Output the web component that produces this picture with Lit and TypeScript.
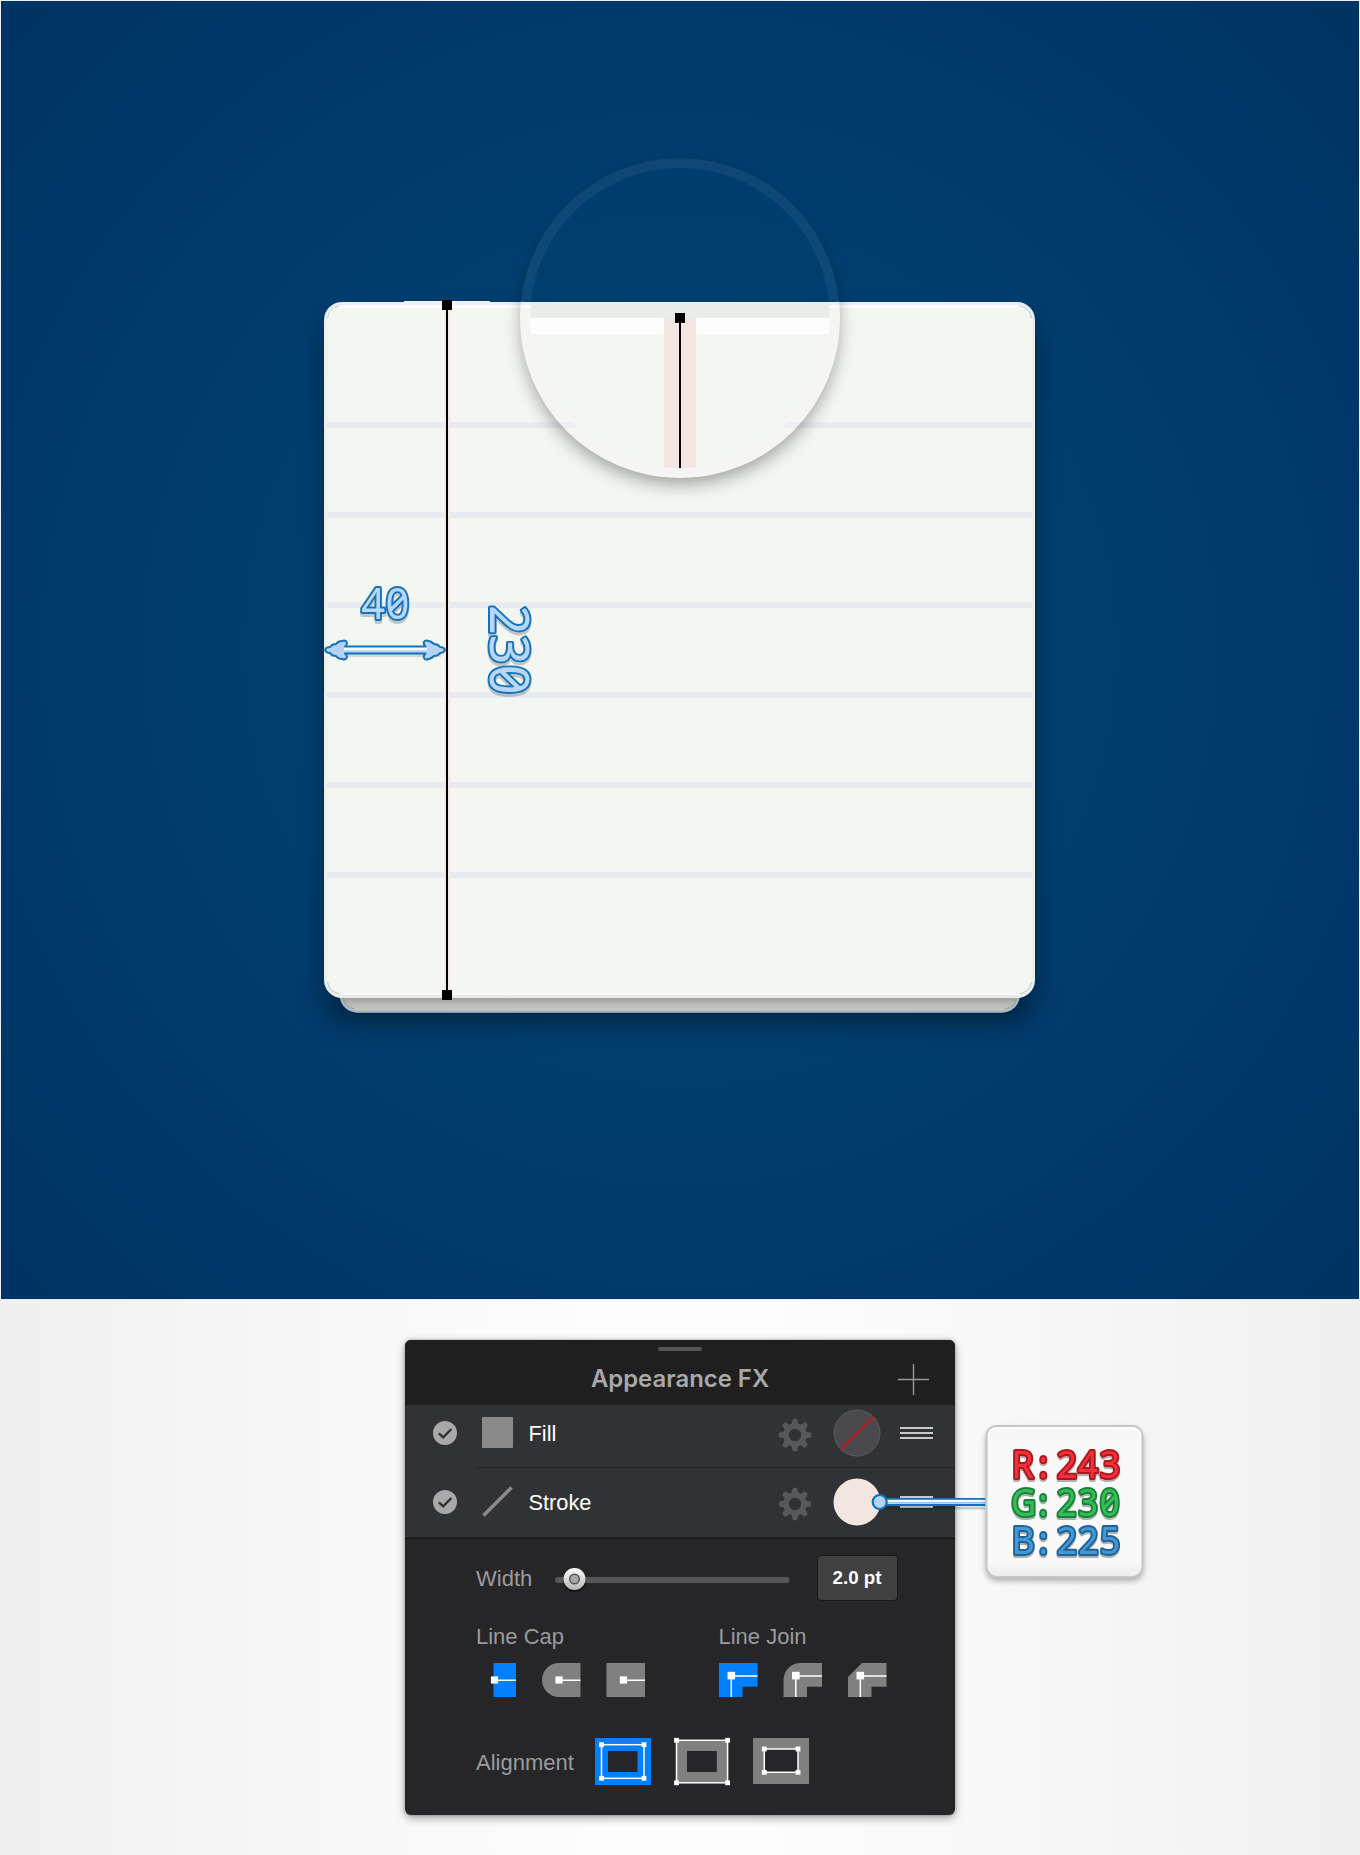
import { LitElement, html, svg, css } from "lit";
import { customElement } from "lit/decorators.js";

const S = (x: number, y: number, r = 3.6) => svg`<rect x=${x - r} y=${y - r} width=${2 * r} height=${2 * r} fill="#fff"/>`;

const gear = () => {
  const teeth = [];
  for (let i = 0; i < 8; i++) {
    teeth.push(svg`<path d="M-3.6 -10 L-2.4 -15.2 Q-2.2 -16.2 -1.2 -16.2 H1.2 Q2.2 -16.2 2.4 -15.2 L3.6 -10Z" transform="rotate(${i * 45})"/>`);
  }
  return html`<svg class="gear" width="34" height="34" viewBox="-17 -17 34 34">
    <g fill="#57585b">${teeth}</g><circle r="9" fill="none" stroke="#57585b" stroke-width="5.6"/></svg>`;
};

const check = html`<svg class="check" width="24" height="24" viewBox="0 0 24 24">
  <circle cx="12" cy="12" r="12" fill="#a9a9aa"/><path d="M5.8 12.3 L10.2 16.4 L18.4 8" fill="none" stroke="#303134" stroke-width="2.3"/></svg>`;

const bars = html`<svg class="bars" width="33" height="14" viewBox="0 0 33 14">
  <path d="M0 2H33M0 7H33M0 12H33" stroke="#c9c9ca" stroke-width="2.2"/></svg>`;

/* Outlined lettering with one x position per character, narrowed by sx. */
const glyphs = (chars: string, xs: number[], y: number, cls: string, size: number, sx: number) => {
  const x = xs.map((v) => (v / sx).toFixed(2)).join(" ");
  return svg`<text class="glyph ${cls}" transform="scale(${sx} 1)" x=${x} y=${y} font-size=${size}>${chars}</text>`;
};

@customElement("app-root")
export class AppRoot extends LitElement {
  static styles = css`
    :host { display: block; width: 1360px; height: 1855px; overflow: hidden;
      font-family: "Liberation Sans", Arial, sans-serif;
      background: linear-gradient(90deg, #f0f0f0 0, #f7f7f7 22%, #fdfdfd 45%, #fdfdfd 55%, #f7f7f7 78%, #f0f0f0 100%); }
    .page { display: flex; flex-direction: column; align-items: center; }
    .art { display: block; }
    .panel { position: relative; margin-top: 40px; width: 550px; height: 475px; border-radius: 6px;
      background: #262628; box-shadow: 0 3px 10px rgba(0,0,0,.36), 0 0 3px rgba(0,0,0,.3); }
    .head { box-sizing: border-box; height: 65px; background: #1f1f1f; border-radius: 6px 6px 0 0;
      display: grid; grid-template-columns: 1fr auto 1fr; grid-template-rows: 5px 58px; padding-top: 6px; justify-items: center; align-items: center; }
    .grab { grid-column: 1 / 4; width: 44px; height: 4px; border-radius: 2px; background: #555557; }
    .title { grid-column: 2; font: 600 23.9px/30px Inter, sans-serif; color: #a8a8a9; margin-bottom: 2px; }
    .plus { justify-self: end; margin-right: 25.5px; margin-bottom: 1px; }
    .row { box-sizing: border-box; display: flex; align-items: center; background: #313235; padding: 0 22px 0 27.5px; color: #fff; font-size: 21.8px; }
    .r1 { height: 63px; padding-bottom: 7.5px; background: linear-gradient(#242427, #242427) 72px 62px / 478px 1.5px no-repeat #313235; }
    .r2 { height: 69.500px; padding-bottom: 1.500px; border-bottom: 1px solid #1c1c1e; }
    .kind { margin-left: 25px; }
    .name { margin-left: 16px; flex: 1; line-height: 30px; padding-top: 2px; }
    .gear { margin: 4px 0 0; }
    .swatch { margin: 0 19.5px 0 21px; }
    .details { padding: 16.500px 0 0 71px; color: #9b9b9d; font-size: 22px; background: linear-gradient(rgba(0,0,0,.22), transparent 3px); }
    .line { display: flex; align-items: center; }
    .width { height: 48px; }
    .label { line-height: 26px; white-space: nowrap; }
    .wl { width: 79px; padding-top: 1px; }
    .slider { display: block; }
    .value { box-sizing: border-box; width: 81px; height: 46px; margin-left: 26.5px; border: 1px solid #19191a; border-radius: 4px;
      background: #404041; color: #fff; font-weight: 700; font-size: 18.8px; line-height: 43px; text-align: center; }
    .heads { display: grid; grid-template-columns: 242.5px auto; margin-top: 21.5px; height: 39.5px; }
    .icons { display: grid; grid-template-columns: 243px auto; }
    .align { margin-top: 39px; height: 52px; }
    .al { width: 118px; padding-top: 1px; }
    .ico { display: block; }
    .callout { position: absolute; left: 466px; top: 75px; overflow: visible; }
    .glyph { font-family: "Noto Sans", sans-serif; font-feature-settings: "zero"; font-weight: 400;
      stroke-linejoin: round; stroke-width: 4; paint-order: stroke; }
    .blue { fill: #b8d7f8; stroke: #1473b9; }
    .cast { filter: url(#bevelBlue); }
    .r { fill: #f0303b; stroke: #b0161e; filter: url(#bevel); }
    .g { fill: #38bd57; stroke: #18823b; filter: url(#bevel); }
    .b { fill: #4499d6; stroke: #1f6396; filter: url(#bevel); }
  `;

  art() {
    const rules = [422, 512, 602, 692, 782, 872];
    return html`<svg class="art" width="1360" height="1300" viewBox="0 0 1360 1300">
      <defs>
        <radialGradient id="sea" gradientUnits="userSpaceOnUse" cx="680" cy="649" r="900">
          <stop offset="0" stop-color="#004274"/><stop offset=".45" stop-color="#003f70"/><stop offset=".75" stop-color="#00386b"/><stop offset="1" stop-color="#003365"/>
        </radialGradient>
        <filter id="soft" x="-20%" y="-20%" width="140%" height="140%"><feGaussianBlur stdDeviation="14"/></filter>
        <filter id="lens" x="-20%" y="-20%" width="140%" height="140%"><feGaussianBlur stdDeviation="9"/></filter>
        <filter id="bevelBlue" x="-20%" y="-20%" width="140%" height="150%">
          <feDropShadow dx="0" dy="3" stdDeviation=".6" flood-color="#000" flood-opacity=".2"/>
        </filter>
        <linearGradient id="under" x1="0" y1="998" x2="0" y2="1013" gradientUnits="userSpaceOnUse">
          <stop offset="0" stop-color="#a0a19e"/><stop offset=".5" stop-color="#bdbdba"/><stop offset="1" stop-color="#cbcbc8"/>
        </linearGradient>
        <clipPath id="inner"><circle cx="680" cy="318" r="150"/></clipPath>
        <clipPath id="sheet"><rect x="324" y="302" width="711" height="696" rx="18"/></clipPath>
        <mask id="outside"><rect width="1360" height="1300" fill="#fff"/><circle cx="680" cy="318" r="160" fill="#000"/></mask>
      </defs>
      <rect width="1360" height="1300" fill="#e8eef4"/>
      <rect x="1" y="1" width="1358" height="1298" fill="url(#sea)"/>
      <rect x="326" y="318" width="707" height="704" rx="22" fill="#000" opacity=".42" filter="url(#soft)"/>
      <rect x="339.500" y="960" width="680.500" height="52.700" rx="18" fill="#a9b9c4"/>
      <rect x="342" y="960" width="675.500" height="50.200" rx="16" fill="url(#under)"/>
      <path d="M343 998a15 12 0 0 0 12 11M1004.500 1009a15 12 0 0 0 12-11" fill="none" stroke="#7d8488" stroke-width=".6"/>
      <rect x="404" y="301" width="86" height="2" fill="#f2f5f4"/>
      <rect x="324" y="302" width="711" height="696" rx="18" fill="#e4eef4"/>
      <g clip-path="url(#sheet)">
        <rect x="324" y="320" width="711" height="660" fill="#ecefea"/>
        <rect x="342" y="995" width="675" height="3" fill="#e8ebe5"/>
        <rect x="342" y="302" width="675" height="3" fill="#eeeff0"/>
        <rect x="327" y="305" width="705" height="690" rx="15" fill="#fff"/>
        <rect x="327" y="308" width="705" height="687" rx="15" fill="#f4f7f1"/>
        <path d="M327.500 318a15 14 0 0 1 12-12M1019.500 306a15 14 0 0 1 12 12M327.500 982a15 14 0 0 0 12 12M1019.500 994a15 14 0 0 0 12-12" fill="none" stroke="#9aa0a2" stroke-width=".6"/>
        ${rules.map((y) => svg`<rect x="327" y=${y} width="705" height="6" fill="#e8ebef"/>`)}
        <rect x="444" y="305" width="6" height="690" fill="#f3e9e5"/>
      </g>
      <g mask="url(#outside)"><circle cx="680" cy="326" r="158" fill="#000" opacity=".36" filter="url(#lens)"/></g>
      <circle cx="680" cy="318" r="155" fill="none" stroke="#f7f6ff" stroke-opacity=".055" stroke-width="10"/>
      <path d="M525.800 302A155 155 0 1 0 834.200 302" fill="none" stroke="#f7f6f8" stroke-opacity=".3" stroke-width="10"/>
      <g clip-path="url(#inner)">
        <rect x="530" y="302" width="300" height="16" fill="#e9ede8"/>
        <rect x="530" y="318" width="300" height="16" fill="#fdfdfd"/>
        <rect x="530" y="334" width="300" height="140" fill="#f4f7f1"/>
        <rect x="664" y="318" width="32" height="150" fill="#f3e6e1"/>
      </g>
      <rect x="679" y="318" width="2" height="150" fill="#000"/>
      <rect x="675" y="313" width="10" height="10" fill="#000"/>
      <rect x="446" y="305" width="2" height="690" fill="#000"/>
      <rect x="442" y="300" width="10" height="10" fill="#000"/>
      <rect x="442" y="990" width="10" height="10" fill="#000"/>
      <path d="M330 654H441" stroke="#000" stroke-opacity=".13" stroke-width="6"/>
      <g stroke="#1473b9" stroke-width="2" stroke-linejoin="round">
        <path fill="#b4d3f6" d="M325 650 Q326 647 330 647 Q332 644 336 644 Q338 641 342 641 Q346 639.500 347 643 Q347 645 345 646.500 H425.500 Q423 644 424 642 Q425 639.500 429 641 Q432 642 434 644 Q438 644 440 647 Q444 647 445 650 Q444 653 440 653 Q438 656 434 656 Q432 658 429 659 Q425 660.500 424 658 Q423 656 425.500 653.500 H345 Q347 655 347 657 Q346 660.500 342 659 Q338 659 336 656 Q332 656 330 653 Q326 653 325 650Z"/>
      </g>
      <path d="M344 649H427" stroke="#f1f8ff" stroke-width="2.600"/>
      <g class="cast">${glyphs("40", [361.2, 385.5], 619, "blue", 44, 0.95)}</g>
      <g class="cast"><g transform="translate(490 604) rotate(90)">${glyphs("230", [1, 30.8, 60.8], 0, "blue", 55.5, 0.94)}</g></g>
    </svg>`;
  }

  caps() {
    return html`<svg class="ico" width="243" height="34" viewBox="476 1663 243 34">
      <path d="M493.500 1663H516V1697H493.500Z" fill="#007fff"/>
      <path d="M580.500 1663H559a17 17 0 0 0 0 34H580.500Z M606.500 1663H645V1697H606.500Z" fill="#808080"/>
      <path d="M494 1680.300H516M559 1680.300H580.500M623 1680.300H645" stroke="#fff" stroke-width="1.500"/>
      ${S(494.5, 1680)}${S(559, 1680)}${S(623.4, 1680)}
    </svg>`;
  }

  joins() {
    const tail = (x: number) => svg`<path d="M${x + 12.3} 1697V1676H${x + 38.5}" fill="none" stroke="#fff" stroke-width="1.500"/>${S(x + 12.3, 1675.6, 3.8)}`;
    return html`<svg class="ico" width="168" height="34" viewBox="719.500 1663 168 34">
      <path d="M719.500 1663H758V1686.700H743V1697H719.500Z" fill="#007fff"/>
      <path d="M784 1697V1680a17 17 0 0 1 17-17H822.500V1686.700H807.500V1697Z M848.500 1697V1677L862.500 1663H887V1686.700H872V1697Z" fill="#808080"/>
      ${tail(719.5)}${tail(784)}${tail(848.5)}
    </svg>`;
  }

  aligns() {
    const frame = (x1: number, y1: number, x2: number, y2: number, fill: string) => svg`
      <rect x=${x1} y=${y1} width=${x2 - x1} height=${y2 - y1} fill=${fill} stroke="#fff" stroke-width="1.500"/>
      ${S(x1, y1, 2.4)}${S(x2, y1, 2.4)}${S(x1, y2, 2.4)}${S(x2, y2, 2.4)}`;
    return html`<svg class="ico" width="216" height="50" viewBox="594 1737 216 50">
      <rect x="595" y="1738" width="56" height="47" fill="#007fff"/>
      ${frame(601.5, 1744.7, 644, 1778.3, "none")}
      <rect x="608" y="1751" width="29.500" height="21" fill="#262628"/>
      ${frame(676.5, 1740.3, 727.6, 1782.8, "#808080")}
      <rect x="687" y="1751" width="29.800" height="21" fill="#262628"/>
      <rect x="753" y="1738" width="56" height="46" fill="#808080"/>
      ${frame(764.3, 1749, 798, 1772.3, "#262628")}
    </svg>`;
  }

  callout() {
    return html`<svg class="callout" width="290" height="180" viewBox="871 1415 290 180">
      <defs>
        <filter id="cs" x="-20%" y="-20%" width="140%" height="140%"><feGaussianBlur stdDeviation="3"/></filter>
        <filter id="bevel" x="-20%" y="-20%" width="140%" height="150%">
          <feDropShadow dx="0" dy="2" stdDeviation=".5" flood-color="#000" flood-opacity=".3"/>
        </filter>
        <linearGradient id="card" x1="0" x2="0" y1="0" y2="1"><stop offset="0" stop-color="#f5f5f5"/><stop offset=".12" stop-color="#f9f9f9"/><stop offset=".9" stop-color="#f9f9f9"/><stop offset="1" stop-color="#ececec"/></linearGradient>
      </defs>
      <path d="M880 1508H985" stroke="#000" stroke-opacity=".18" stroke-width="3"/>
      <path d="M880 1502H985.500" stroke="#1272b8" stroke-width="8"/>
      <path d="M880 1501H985.500" stroke="#f2f8ff" stroke-width="2.600"/><path d="M880 1503.200H985.500" stroke="#b7d5f6" stroke-width="1.800"/>
      <circle cx="879.700" cy="1502" r="7" fill="#b3d2f6" stroke="#1272b8" stroke-width="2.200"/>
      <rect x="986" y="1429" width="157" height="152" rx="11" fill="#000" opacity=".3" filter="url(#cs)"/>
      <rect x="986.500" y="1426" width="156" height="151" rx="10" fill="url(#card)" stroke="#c6c6c6" stroke-width="2"/>
      <path d="M988.500 1436Q989 1428.300 997 1428.300H1132Q1140 1428.300 1140.500 1436" fill="none" stroke="#fff" stroke-width="2"/>
      ${glyphs("R:243", [1011.5, 1038.6, 1056.7, 1077.8, 1099.8], 1478.2, "r", 39, 0.92)}
      ${glyphs("G:230", [1011, 1038.6, 1056.7, 1078.3, 1099.8], 1516.2, "g", 39, 0.89)}
      ${glyphs("B:225", [1011.5, 1038.6, 1056.7, 1078.3, 1099.8], 1554.2, "b", 39, 0.92)}
    </svg>`;
  }

  render() {
    return html`<div class="page">
      ${this.art()}
      <section class="panel">
        <div class="head">
          <span class="grab"></span><span></span><span class="title">Appearance FX</span>
          <svg class="plus" width="33" height="33" viewBox="0 0 33 33"><path d="M1 16.500H32M16.500 1V32" stroke="#98989a" stroke-width="1.400"/></svg>
        </div>
        <div class="row r1">${check}
          <svg class="kind" width="31" height="31"><rect width="31" height="31" rx="1" fill="#8a8a8b"/></svg>
          <span class="name">Fill</span>${gear()}
          <svg class="swatch" width="48" height="48" viewBox="0 0 48 48"><circle cx="24" cy="24" r="23" fill="#4a4a4c" stroke="#5c5c5e" stroke-width="1"/><path d="M8 40.300 40.300 8" stroke="#a5272b" stroke-width="2.800"/></svg>
          ${bars}
        </div>
        <div class="row r2">${check}
          <svg class="kind" width="31" height="31"><path d="M1.500 29.500 29.500 1.500" stroke="#8a8a8b" stroke-width="3.600"/></svg>
          <span class="name">Stroke</span>${gear()}
          <svg class="swatch" width="48" height="48" viewBox="0 0 48 48"><circle cx="24" cy="24" r="23.500" fill="#f3e6e1"/></svg>
          ${bars}
        </div>
        <div class="details">
          <div class="line width"><span class="label wl">Width</span>
            <svg class="slider" width="235" height="30" viewBox="555.500 1563 235 30">
              <defs><linearGradient id="knob" x1="0" y1="0" x2="0" y2="1"><stop offset="0" stop-color="#fff"/><stop offset="1" stop-color="#b4b4b4"/></linearGradient></defs>
              <rect x="555.500" y="1577" width="234.500" height="6" rx="3" fill="#565658"/>
              <circle cx="575" cy="1580.500" r="11.500" fill="#000" opacity=".5"/><circle cx="575" cy="1579" r="11" fill="url(#knob)"/>
              <circle cx="575" cy="1579" r="4.800" fill="#a9a9a9" stroke="#58585a" stroke-width="1.500"/>
            </svg>
            <span class="value">2.0 pt</span></div>
          <div class="heads"><span class="label">Line Cap</span><span class="label">Line Join</span></div>
          <div class="icons">${this.caps()}${this.joins()}</div>
          <div class="line align"><span class="label al">Alignment</span>${this.aligns()}</div>
        </div>
        ${this.callout()}
      </section>
    </div>`;
  }
}
